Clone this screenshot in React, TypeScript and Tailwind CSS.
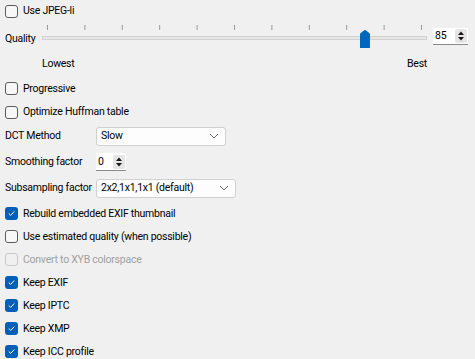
import React from "react";

function CheckBox({ checked = false, disabled = false }: { checked?: boolean; disabled?: boolean }) {
  if (checked) {
    return (
      <div className="w-[13px] h-[13px] rounded-[3px] bg-[#005fb8] flex items-center justify-center shrink-0">
        <svg width="9" height="9" viewBox="0 0 9 9">
          <path d="M2 4.8 L3.7 6.4 L7 2.8" fill="none" stroke="#fff" strokeWidth="1" strokeLinecap="round" strokeLinejoin="round" />
        </svg>
      </div>
    );
  }
  return (
    <div
      className={
        disabled
          ? "w-[13px] h-[13px] rounded-[3px] border border-[#c8c8c8] bg-[#f0f0f0] shrink-0"
          : "w-[13px] h-[13px] rounded-[3px] border border-[#5c5c5c] bg-[#f7f7f7] shrink-0"
      }
    />
  );
}

function CheckRow({ label, checked, disabled }: { label: string; checked?: boolean; disabled?: boolean }) {
  return (
    <div className="h-[23px] flex items-center gap-[5px]">
      <CheckBox checked={checked} disabled={disabled} />
      <span className={disabled ? "text-[#a0a0a0]" : "text-black"}>{label}</span>
    </div>
  );
}

function SpinArrows() {
  return (
    <div className="w-[12px] h-[14px] bg-[#e5e5e5] rounded-[2px] flex items-center justify-center">
      <svg width="8" height="12" viewBox="0 0 8 12">
        <path d="M1 5 L4 1.5 L7 5 Z" fill="#1a1a1a" />
        <path d="M1 7 L4 10.5 L7 7 Z" fill="#1a1a1a" />
      </svg>
    </div>
  );
}

function Dropdown({ value, width }: { value: string; width: string }) {
  return (
    <div
      className={`${width} h-[19px] bg-[#fdfdfd] border border-[#d0d0d0] rounded-[3px] flex items-center justify-between pl-[4px] pr-[6px]`}
    >
      <span>{value}</span>
      <svg width="10" height="6" viewBox="0 0 10 6">
        <path d="M1 1 L5 5 L9 1" fill="none" stroke="#6a6a6a" strokeWidth="1" />
      </svg>
    </div>
  );
}

function Slider() {
  const ticks = Array.from({ length: 11 }, (_, i) => 5.5 + i * 37.4);
  return (
    <svg width="385" height="28" viewBox="0 0 385 28">
      {ticks.map((x) => (
        <line key={x} x1={x} y1={3} x2={x} y2={8} stroke="#9a9a9a" strokeWidth="1" />
      ))}
      <rect x="0.5" y="14.5" width="384" height="3" fill="#e6e6e6" stroke="#d2d2d2" />
      <path d="M318 26 L318 12.5 Q318 11.5 319 10.8 L322.3 8.3 Q323 7.8 323.7 8.3 L327 10.8 Q328 11.5 328 12.5 L328 26 Z" fill="#0067c0" />
    </svg>
  );
}

export default function App() {
  return (
    <div
      className="w-[475px] h-[359px] bg-[#f0f0f0] overflow-hidden pl-[5px] text-[10.5px] tracking-[-0.25px] text-black whitespace-nowrap"
      style={{ fontFamily: 'Roboto, "Liberation Sans", Arial, sans-serif' }}
    >
      <div className="h-[22px] flex items-center gap-[5px]">
        <CheckBox />
        <span>Use JPEG-li</span>
      </div>

      {/* quality slider */}
      <div className="h-[28px] flex">
        <div className="w-[37px] shrink-0 pt-[9px]">Quality</div>
        <Slider />
        <div className="ml-[6px] mt-[6px] w-[35px] h-[17px] bg-white border-b border-[#8a8a8a] flex items-center justify-between pl-[2px] pr-[1px]">
          <span>85</span>
          <SpinArrows />
        </div>
      </div>
      <div className="h-[27px] flex items-center justify-between pl-[37px] w-[422px]">
        <span>Lowest</span>
        <span>Best</span>
      </div>

      <CheckRow label="Progressive" />
      <div className="h-[24px] flex items-center gap-[5px]">
        <CheckBox />
        <span>Optimize Huffman table</span>
      </div>

      <div className="h-[24px] flex items-center">
        <span className="w-[91px] shrink-0">DCT Method</span>
        <Dropdown value="Slow" width="w-[130px]" />
      </div>
      <div className="h-[28px] flex items-center">
        <span className="w-[91px] shrink-0">Smoothing factor</span>
        <div className="w-[30px] h-[18px] bg-white border-b border-[#8a8a8a] flex items-center justify-between pl-[2px] pr-[1px]">
          <span>0</span>
          <SpinArrows />
        </div>
      </div>
      <div className="h-[26px] flex items-center pb-[2px]">
        <span className="w-[91px] shrink-0">Subsampling factor</span>
        <Dropdown value="2x2,1x1,1x1 (default)" width="w-[140px]" />
      </div>

      <CheckRow label="Rebuild embedded EXIF thumbnail" checked />
      <CheckRow label="Use estimated quality (when possible)" />
      <CheckRow label="Convert to XYB colorspace" disabled />
      <CheckRow label="Keep EXIF" checked />
      <CheckRow label="Keep IPTC" checked />
      <CheckRow label="Keep XMP" checked />
      <CheckRow label="Keep ICC profile" checked />
    </div>
  );
}
